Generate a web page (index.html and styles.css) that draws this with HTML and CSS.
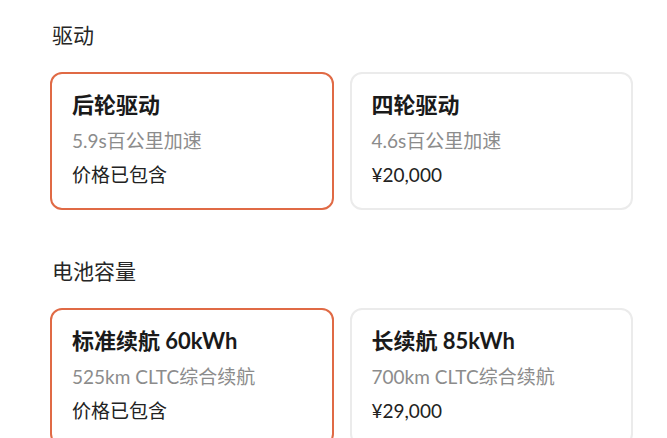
FILE: index.html
```html
<!DOCTYPE html>
<html lang="zh">
<head>
<meta charset="utf-8">
<link rel="stylesheet" href="styles.css">
</head>
<body>
<div class="page">
  <section class="section">
    <h2 class="section-title">驱动</h2>
    <div class="options">
      <div class="card selected">
        <div class="card-title">后轮驱动</div>
        <div class="card-sub">5.9s百公里加速</div>
        <div class="card-price">价格已包含</div>
      </div>
      <div class="card">
        <div class="card-title">四轮驱动</div>
        <div class="card-sub">4.6s百公里加速</div>
        <div class="card-price">¥20,000</div>
      </div>
    </div>
  </section>
  <section class="section">
    <h2 class="section-title">电池容量</h2>
    <div class="options">
      <div class="card selected">
        <div class="card-title">标准续航 60kWh</div>
        <div class="card-sub">525km CLTC综合续航</div>
        <div class="card-price">价格已包含</div>
      </div>
      <div class="card">
        <div class="card-title">长续航 85kWh</div>
        <div class="card-sub">700km CLTC综合续航</div>
        <div class="card-price">¥29,000</div>
      </div>
    </div>
  </section>
</div>
</body>
</html>
```
FILE: styles.css
```css
html, body {
  margin: 0;
  padding: 0;
  background: #ffffff;
}
body {
  font-family: "Lato", "Noto Sans CJK SC", sans-serif;
  color: #1c1c1c;
  overflow: hidden;
}
.page {
  padding: 21px 34px 0 50px;
}
.section + .section {
  margin-top: 47px;
}
.section-title {
  margin: 0 0 23px 2px;
  font-size: 21px;
  line-height: 28px;
  font-weight: 400;
  color: #262626;
}
.options {
  display: grid;
  grid-template-columns: 1fr 1fr;
  gap: 16px;
}
.card {
  border: 2px solid #ebebeb;
  border-radius: 12px;
  padding: 17px 20px 20px 20px;
  background: #fff;
}
.card.selected {
  border-color: #e06a45;
}
.card-title {
  font-size: 22px;
  line-height: 28px;
  font-weight: 700;
  color: #1a1a1a;
}
.card-sub {
  margin-top: 9px;
  font-size: 19px;
  line-height: 26px;
  color: #8c8c8c;
}
.card-price {
  margin-top: 8px;
  font-size: 19px;
  line-height: 26px;
  color: #222222;
}
```
